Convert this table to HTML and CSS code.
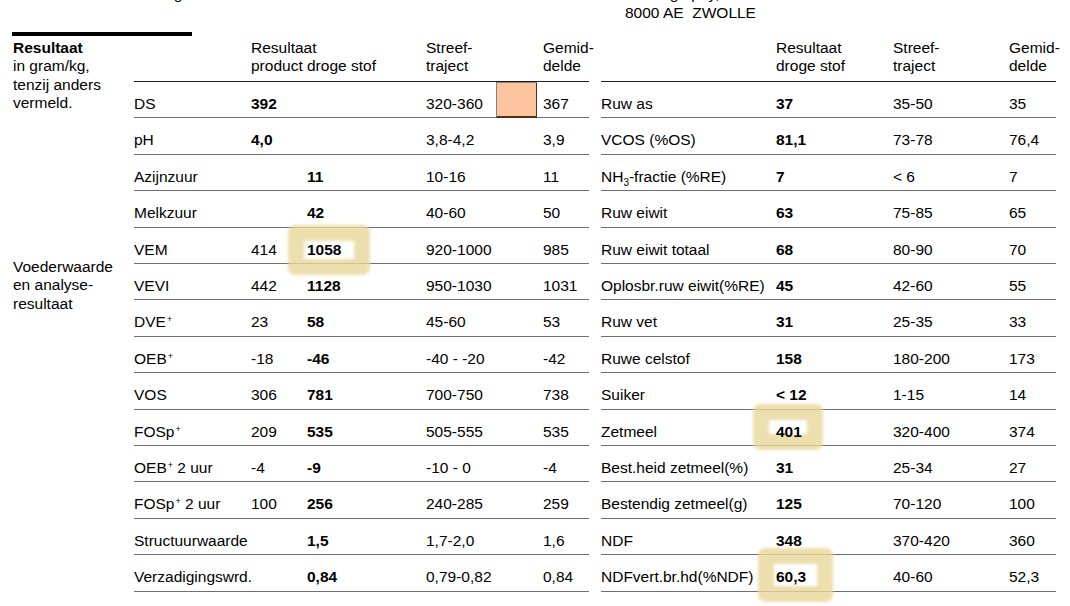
FILE: index.html
```html
<!DOCTYPE html>
<html lang="nl">
<head>
<meta charset="utf-8">
<title>Resultaat</title>
<link rel="stylesheet" href="styles.css">
</head>
<body>
<div class="page">
  <header class="top">
    <div class="addr-left"><div class="clipline">Uitslag</div></div>
    <div class="addr-right">
      <div class="clipline">Zeilweg opay,</div>
      <div>8000 AE&nbsp; ZWOLLE</div>
    </div>
  </header>
  <div class="bar"></div>
  <main class="content">
    <aside class="side">
      <p class="side-block"><b>Resultaat</b><br>in gram/kg,<br>tenzij anders<br>vermeld.</p>
      <p class="side-block second">Voederwaarde<br>en analyse-<br>resultaat</p>
    </aside>

    <table class="t t-left">
      <colgroup>
        <col class="c-lab"><col class="c-prod"><col class="c-ds"><col class="c-str"><col class="c-box"><col class="c-gem">
      </colgroup>
      <thead>
        <tr>
          <th></th>
          <th class="nw">Resultaat<br>product</th>
          <th class="nw"><br>droge stof</th>
          <th>Streef-<br>traject</th>
          <th></th>
          <th class="gem">Gemid-<br>delde</th>
        </tr>
      </thead>
      <tbody>
        <tr><td>DS</td><td><b>392</b></td><td></td><td>320-360</td><td class="box"></td><td class="gem">367</td></tr>
        <tr><td>pH</td><td><b>4,0</b></td><td></td><td>3,8-4,2</td><td></td><td class="gem">3,9</td></tr>
        <tr><td>Azijnzuur</td><td></td><td><b>11</b></td><td>10-16</td><td></td><td class="gem">11</td></tr>
        <tr><td>Melkzuur</td><td></td><td><b>42</b></td><td>40-60</td><td></td><td class="gem">50</td></tr>
        <tr><td>VEM</td><td>414</td><td class="rel"><span class="hl hl-vem"></span><b>1058</b></td><td>920-1000</td><td></td><td class="gem">985</td></tr>
        <tr><td>VEVI</td><td>442</td><td><b>1128</b></td><td>950-1030</td><td></td><td class="gem">1031</td></tr>
        <tr><td>DVE<sup>+</sup></td><td>23</td><td><b>58</b></td><td>45-60</td><td></td><td class="gem">53</td></tr>
        <tr><td>OEB<sup>+</sup></td><td>-18</td><td><b>-46</b></td><td>-40 - -20</td><td></td><td class="gem">-42</td></tr>
        <tr><td>VOS</td><td>306</td><td><b>781</b></td><td>700-750</td><td></td><td class="gem">738</td></tr>
        <tr><td>FOSp<sup>+</sup></td><td>209</td><td><b>535</b></td><td>505-555</td><td></td><td class="gem">535</td></tr>
        <tr><td>OEB<sup>+</sup> 2 uur</td><td>-4</td><td><b>-9</b></td><td>-10 - 0</td><td></td><td class="gem">-4</td></tr>
        <tr><td>FOSp<sup>+</sup> 2 uur</td><td>100</td><td><b>256</b></td><td>240-285</td><td></td><td class="gem">259</td></tr>
        <tr><td class="nw">Structuurwaarde</td><td></td><td><b>1,5</b></td><td>1,7-2,0</td><td></td><td class="gem">1,6</td></tr>
        <tr><td class="nw">Verzadigingswrd.</td><td></td><td><b>0,84</b></td><td class="nw">0,79-0,82</td><td></td><td class="gem">0,84</td></tr>
      </tbody>
    </table>

    <table class="t t-right">
      <colgroup>
        <col class="r-lab"><col class="r-ds"><col class="r-str"><col class="r-gem">
      </colgroup>
      <thead>
        <tr>
          <th></th>
          <th>Resultaat<br>droge stof</th>
          <th>Streef-<br>traject</th>
          <th>Gemid-<br>delde</th>
        </tr>
      </thead>
      <tbody>
        <tr><td>Ruw as</td><td><b>37</b></td><td>35-50</td><td>35</td></tr>
        <tr><td>VCOS (%OS)</td><td><b>81,1</b></td><td>73-78</td><td>76,4</td></tr>
        <tr><td>NH<sub>3</sub>-fractie (%RE)</td><td><b>7</b></td><td>&lt; 6</td><td>7</td></tr>
        <tr><td>Ruw eiwit</td><td><b>63</b></td><td>75-85</td><td>65</td></tr>
        <tr><td>Ruw eiwit totaal</td><td><b>68</b></td><td>80-90</td><td>70</td></tr>
        <tr><td class="nw">Oplosbr.ruw eiwit(%RE)</td><td><b>45</b></td><td>42-60</td><td>55</td></tr>
        <tr><td>Ruw vet</td><td><b>31</b></td><td>25-35</td><td>33</td></tr>
        <tr><td>Ruwe celstof</td><td><b>158</b></td><td>180-200</td><td>173</td></tr>
        <tr><td>Suiker</td><td><b>&lt; 12</b></td><td>1-15</td><td>14</td></tr>
        <tr><td>Zetmeel</td><td class="rel"><span class="hl hl-zet"></span><b>401</b></td><td>320-400</td><td>374</td></tr>
        <tr><td>Best.heid zetmeel(%)</td><td><b>31</b></td><td>25-34</td><td>27</td></tr>
        <tr><td>Bestendig zetmeel(g)</td><td><b>125</b></td><td>70-120</td><td>100</td></tr>
        <tr><td>NDF</td><td><b>348</b></td><td>370-420</td><td>360</td></tr>
        <tr><td class="nw">NDFvert.br.hd(%NDF)</td><td class="rel"><span class="hl hl-ndf"></span><b>60,3</b></td><td>40-60</td><td>52,3</td></tr>
      </tbody>
    </table>
  </main>
</div>
</body>
</html>
```

FILE: styles.css
```css
* { box-sizing: border-box; }

html, body {
  margin: 0;
  padding: 0;
  background: #ffffff;
}

body {
  font-family: "Liberation Sans", Arial, sans-serif;
  font-size: 15.5px;
  line-height: 18.4px;
  color: #000;
  overflow: hidden;
}

.page {
  width: 1070px;
  height: 606px;
  padding-left: 13px;
}

/* top address strip */
.top {
  display: flex;
  height: 32px;
}

.addr-left {
  width: 612px;
  padding-left: 122px;
}

.addr-right {
  white-space: nowrap;
}

.clipline {
  margin-top: -14.6px;
  height: 18.4px;
  white-space: nowrap;
}

.bar {
  width: 180px;
  height: 4px;
  margin-left: -1px;
  background: #000;
}

/* main content */
.content {
  display: flex;
  align-items: flex-start;
  padding-top: 2.8px;
}

.side {
  width: 121px;
  flex: none;
}

.side-block {
  margin: 0;
}

.side-block.second {
  margin-top: 145.4px;
}

.t {
  border-collapse: separate;
  border-spacing: 0;
  table-layout: fixed;
  flex: none;
}

.t-left { width: 455px; }
.t-right { width: 455px; margin-left: 12px; }

.c-lab { width: 117px; }
.c-prod { width: 56px; }
.c-ds { width: 119px; }
.c-str { width: 70px; }
.c-box { width: 41px; }
.c-gem { width: 52px; }

.r-lab { width: 175px; }
.r-ds { width: 117px; }
.r-str { width: 116px; }
.r-gem { width: 47px; }

.t th {
  font-weight: normal;
  text-align: left;
  vertical-align: bottom;
  padding: 0 0 5.4px 0;
  border-bottom: 1px solid #1e1e1e;
  white-space: nowrap;
}

.t td {
  text-align: left;
  vertical-align: top;
  padding: 13px 0 4px 0;
  border-bottom: 1px solid #6e6e6e;
  white-space: nowrap;
}

.t .gem { padding-left: 6px; }

.nw { white-space: nowrap; }

.t b { font-weight: bold; }

.t td.box {
  background: #fdc4a0;
  box-shadow: inset 1px 1px 0 #8e7f76, inset -1px -1px 0 #4c3219;
  border-bottom-color: #4c3219;
}

sup {
  font-size: 9px;
  line-height: 0;
  vertical-align: 5px;
  margin-left: 1px;
}

sub {
  font-size: 10px;
  line-height: 0;
  vertical-align: -4px;
}

.rel { position: relative; }

.rel b { position: relative; }

/* fuzzy highlight rings */
.hl {
  position: absolute;
  border-radius: 7px;
  border: 16px solid rgba(233, 215, 152, 0.8);
  filter: blur(1.6px);
  pointer-events: none;
}

.hl-vem { left: -19px; top: -3px; width: 82px; height: 50px; }
.hl-zet { left: -23px; top: -6px; width: 70px; height: 46px; }
.hl-ndf { left: -18px; top: -7px; width: 75px; height: 54px; }
```
